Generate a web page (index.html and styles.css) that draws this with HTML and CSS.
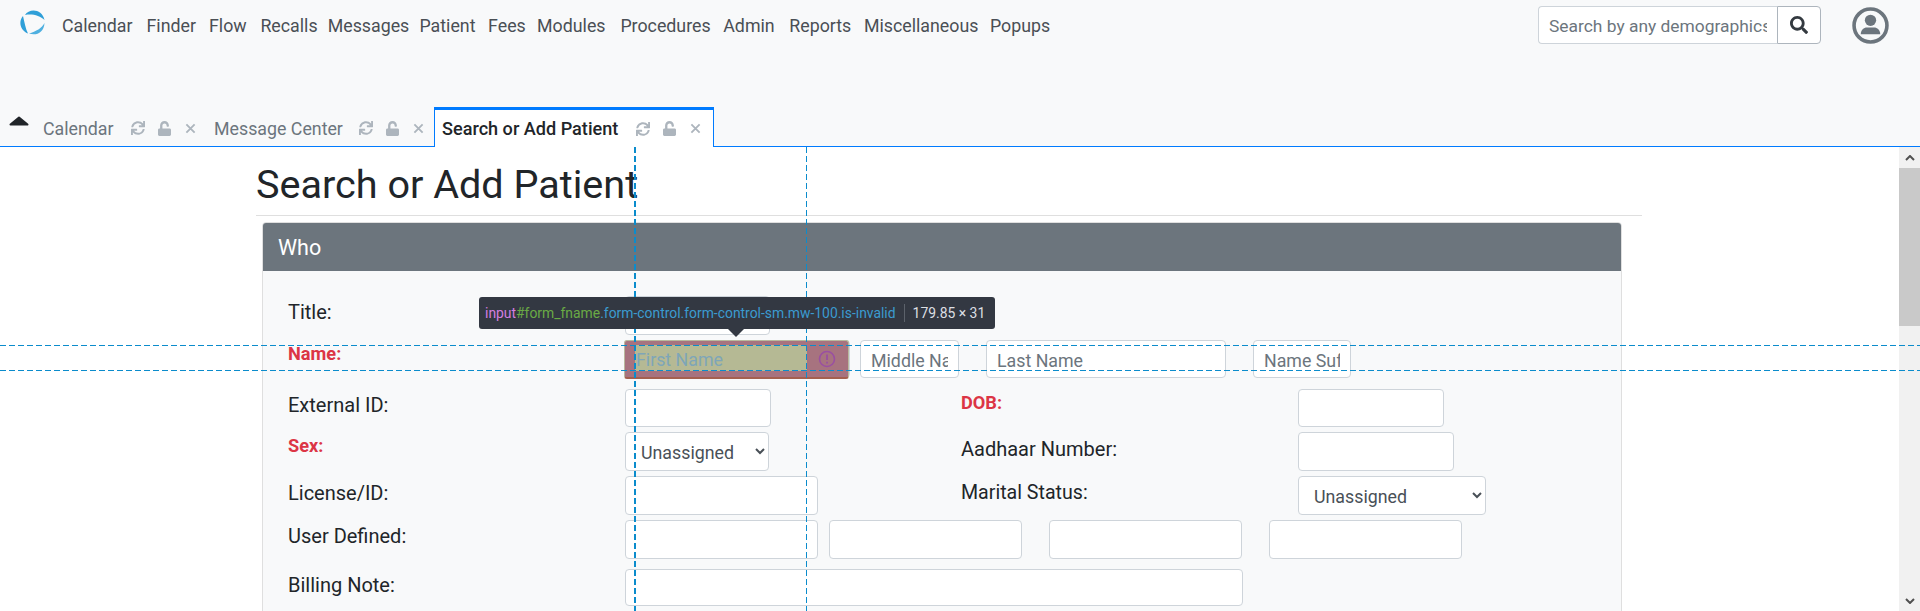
FILE: index.html
```html
<!DOCTYPE html>
<html lang="en">
<head>
  <meta charset="UTF-8" />
  <title>Search or Add Patient</title>
  <link rel="stylesheet" href="styles.css">
</head>
<body>
  <svg class="defs" width="0" height="0">
    <symbol id="i-sync" viewBox="0 0 512 512"><path d="M440.65 12.57l4 82.77A247.16 247.16 0 0 0 255.83 8C134.73 8 33.91 94.92 12.29 209.82A12 12 0 0 0 24.09 224h49.05a12 12 0 0 0 11.67-9.26 175.91 175.91 0 0 1 317-56.94l-101.46-4.86a12 12 0 0 0-12.57 12v47.41a12 12 0 0 0 12 12H500a12 12 0 0 0 12-12V12a12 12 0 0 0-12-12h-47.37a12 12 0 0 0-11.98 12.57zM255.83 432a175.61 175.61 0 0 1-146-77.8l101.8 4.87a12 12 0 0 0 12.57-12v-47.4a12 12 0 0 0-12-12H12a12 12 0 0 0-12 12V500a12 12 0 0 0 12 12h47.35a12 12 0 0 0 12-12.6l-4.15-82.57A247.17 247.17 0 0 0 255.83 504c121.11 0 221.93-86.92 243.55-201.82a12 12 0 0 0-11.8-14.18h-49.05a12 12 0 0 0-11.67 9.26A175.86 175.86 0 0 1 255.83 432z"/></symbol>
    <symbol id="i-unlock" viewBox="0 0 448 512"><path d="M400 256H152V152.9c0-39.6 31.7-72.5 71.3-72.9 40-.4 72.7 32.1 72.7 72v16c0 13.3 10.7 24 24 24h32c13.3 0 24-10.7 24-24v-16C376 68 307.5-.3 223.5 0 139.5.3 72 69.5 72 153.5V256H48c-26.5 0-48 21.5-48 48v160c0 26.5 21.5 48 48 48h352c26.5 0 48-21.5 48-48V304c0-26.5-21.5-48-48-48z"/></symbol>
    <symbol id="i-times" viewBox="0 0 12 12"><path d="M1.5 1.5l9 9M10.5 1.5l-9 9" stroke="currentColor" stroke-width="2" fill="none"/></symbol>
  </svg>

  <header class="topbar">
    <svg class="logo" viewBox="0 0 25 25">
      <path d="M5 5C9-1.500 22-1.500 24.500 10 20 5.500 12 3.500 5 5z" fill="#2f9fd8"/>
      <path d="M3 6C-1.500 11-.5 20 8 23.500 5.500 19 4.500 12 3 6z" fill="#2f9fd8"/>
      <path d="M9 23.500C16 26 24 23 24.500 13 22 18 16 21.500 9 23.500z" fill="#4fb0e0"/>
    </svg>
    <nav class="mainnav">
      <a href="#">Calendar</a>
      <a href="#">Finder</a>
      <a href="#">Flow</a>
      <a href="#">Recalls</a>
      <a href="#">Messages</a>
      <a href="#">Patient</a>
      <a href="#">Fees</a>
      <a href="#">Modules</a>
      <a href="#">Procedures</a>
      <a href="#">Admin</a>
      <a href="#">Reports</a>
      <a href="#">Miscellaneous</a>
      <a href="#">Popups</a>
    </nav>
    <div class="search">
      <input type="text" placeholder="Search by any demographics" />
      <button>
        <svg viewBox="0 0 512 512"><path d="M505 442.7L405.3 343c-4.500-4.500-10.600-7-17-7H372c27.600-35.300 44-79.700 44-128C416 93.100 322.900 0 208 0S0 93.100 0 208s93.100 208 208 208c48.300 0 92.700-16.400 128-44v16.300c0 6.400 2.500 12.500 7 17l99.700 99.700c9.400 9.400 24.600 9.400 33.900 0l28.300-28.300c9.400-9.400 9.400-24.600.1-34zM208 336c-70.700 0-128-57.200-128-128 0-70.700 57.200-128 128-128 70.700 0 128 57.200 128 128 0 70.700-57.200 128-128 128z"/></svg>
      </button>
    </div>
    <svg class="avatar" viewBox="0 0 36 36">
      <circle cx="18" cy="18" r="16" fill="none" stroke="#6c757d" stroke-width="3.500"/>
      <circle cx="18" cy="13" r="5.500" fill="#6c757d"/>
      <path d="M8.500 26.500c0-4 3-6.500 6-6.500h7c3 0 6 2.500 6 6.500z" fill="#6c757d"/>
    </svg>
  </header>

  <div class="tabbar">
    <svg class="caret" viewBox="0 0 20 10"><path d="M10 1.500L18.500 8.500H1.500z" fill="#212529" stroke="#212529" stroke-width="2" stroke-linejoin="round"/></svg>
    <div class="tab tab-first">
      <span class="tab-name">Calendar</span>
      <svg class="ic ic-sync"><use href="#i-sync"/></svg>
      <svg class="ic ic-lock"><use href="#i-unlock"/></svg>
      <svg class="ic ic-x"><use href="#i-times"/></svg>
    </div>
    <div class="tab tab-second">
      <span class="tab-name">Message Center</span>
      <svg class="ic ic-sync"><use href="#i-sync"/></svg>
      <svg class="ic ic-lock"><use href="#i-unlock"/></svg>
      <svg class="ic ic-x"><use href="#i-times"/></svg>
    </div>
    <div class="tab tab-active">
      <span class="tab-name">Search or Add Patient</span>
      <svg class="ic ic-sync"><use href="#i-sync"/></svg>
      <svg class="ic ic-lock"><use href="#i-unlock"/></svg>
      <svg class="ic ic-x"><use href="#i-times"/></svg>
    </div>
  </div>

  <div class="workarea">
    <main class="content">
      <h2 class="page-title">Search or Add Patient</h2>
      <hr class="title-rule" />
      <section class="card">
        <div class="card-head">Who</div>
        <div class="card-body">
          <div class="row row-title">
            <label class="lbl">Title:</label>
            <input class="w145" type="text" />
          </div>
          <div class="row row-name">
            <label class="lbl req">Name:</label>
            <input class="w225 invalid" type="text" />
            <input class="w99" type="text" placeholder="Middle Name" />
            <input class="w240" type="text" placeholder="Last Name" />
            <input class="w98" type="text" placeholder="Name Suffix" />
          </div>
          <div class="row row-ext">
            <label class="lbl">External ID:</label>
            <input class="w146" type="text" />
            <label class="lbl2 req">DOB:</label>
            <input class="w146" type="text" />
          </div>
          <div class="row">
            <label class="lbl req">Sex:</label>
            <select class="w144"><option>Unassigned</option></select>
            <label class="lbl2 lbl2-sex">Aadhaar Number:</label>
            <input class="w156" type="text" />
          </div>
          <div class="row row-lic">
            <label class="lbl">License/ID:</label>
            <input class="w193" type="text" />
            <label class="lbl2 lbl2-lic">Marital Status:</label>
            <select class="w188"><option>Unassigned</option></select>
          </div>
          <div class="row row-user">
            <label class="lbl">User Defined:</label>
            <input class="w193" type="text" />
            <input class="w193" type="text" />
            <input class="w193" type="text" />
            <input class="w193" type="text" />
          </div>
          <div class="row row-bill">
            <label class="lbl">Billing Note:</label>
            <input class="w618" type="text" />
          </div>
        </div>
      </section>
    </main>
    <aside class="scrollbar">
      <div class="sb-btn"><svg viewBox="0 0 10 6"><path d="M1 5l4-4 4 4" fill="none" stroke="#505050" stroke-width="2"/></svg></div>
      <div class="sb-thumb"></div>
      <div class="sb-track"></div>
      <div class="sb-btn"><svg viewBox="0 0 10 6"><path d="M1 1l4 4 4-4" fill="none" stroke="#505050" stroke-width="2"/></svg></div>
    </aside>
  </div>

  <!-- devtools inspect overlay -->
  <div class="hl">
    <span class="hl-text">First Name</span>
    <svg class="hl-icon" viewBox="0 0 18 18">
      <circle cx="9" cy="9" r="7.500" fill="none" stroke="#9a4fa2" stroke-width="1.600"/>
      <path d="M9 4.500v5.500M9 11.800v1.700" stroke="#9a4fa2" stroke-width="1.800" fill="none"/>
    </svg>
  </div>

  <div class="guide guide-v guide-v1"></div>
  <div class="guide guide-v guide-v2"></div>
  <div class="guide guide-h guide-h1"></div>
  <div class="guide guide-h guide-h2"></div>

  <div class="inspect-tip">
    <span class="t-tag">input</span><span class="t-id">#form_fname</span><span class="t-cls">.form-control.form-control-sm.mw-100.is-invalid</span><span class="t-sep"></span><span class="t-size">179.85 × 31</span>
  </div>
</body>
</html>
```

FILE: styles.css
```css
* {
  box-sizing: border-box;
}

html, body {
  margin: 0;
  height: 611px;
  overflow: hidden;
}

body {
  position: relative;
  background: #fff;
  color: #212529;
  font-family: Roboto, "Open Sans", sans-serif;
  font-size: 20px;
}

.defs {
  position: absolute;
}

/* top navigation */
.topbar {
  height: 107px;
  background: #f8f9fa;
  display: flex;
  align-items: flex-start;
  padding-left: 20px;
  padding-right: 31px;
}

.logo {
  width: 25px;
  height: 25px;
  margin-top: 10px;
  flex: none;
}

.mainnav {
  display: grid;
  grid-template-columns: 84.500px 62.500px 51.400px 67.300px 91.800px 68.600px 49px 83.300px 102.900px 66px 74.700px 126px auto;
  align-items: center;
  height: 51px;
  margin-left: 17px;
  flex: 1;
}

.mainnav a {
  color: #4a4f55;
  text-decoration: none;
  font-size: 17.800px;
}

.search {
  display: flex;
  margin-top: 6px;
  width: 283px;
  height: 38px;
}

.search input {
  width: 239px;
  height: 38px;
  border: 1px solid #ced4da;
  border-right: 0;
  border-radius: 4px 0 0 4px;
  padding: 2px 10px 0;
  font: 17.400px Roboto, sans-serif;
  color: #495057;
}

.search input::placeholder, .row input::placeholder {
  color: #6c757d;
  opacity: 1;
}

.search button {
  width: 44px;
  height: 38px;
  background: #fff;
  border: 1px solid #adb5bd;
  border-radius: 0 4px 4px 0;
  padding: 0;
  display: flex;
  align-items: center;
  justify-content: center;
}

.search button svg {
  width: 18px;
  height: 18px;
  fill: #343a40;
}

.avatar {
  width: 37px;
  height: 37px;
  margin-top: 7px;
  margin-left: 31px;
}

/* tabs */
.tabbar {
  height: 40px;
  background: #f8f9fa;
  border-bottom: 1px solid #007bff;
  display: flex;
  padding-left: 9px;
}

.caret {
  width: 20px;
  height: 10px;
  margin-top: 9px;
  flex: none;
}

.tab {
  display: flex;
  align-items: center;
  height: 40px;
  padding-top: 2px;
  font-size: 17.800px;
  color: #6c757d;
}

.tab-first {
  margin-left: 14px;
  width: 171px;
}

.tab-second {
  width: 220px;
}

.tab-active {
  width: 280px;
  padding-left: 7px;
  padding-top: 0;
  background: #fff;
  color: #212529;
  border: 1px solid #007bff;
  border-top: 3px solid #007bff;
  border-bottom: 0;
  font-weight: 500;
  font-size: 18.100px;
}

.tab-name {
  white-space: nowrap;
}

.tab-first .tab-name { width: 88px; }
.tab-second .tab-name { width: 145px; }
.tab-active .tab-name { width: 194px; }

.ic {
  fill: #adb5bd;
  color: #adb5bd;
  flex: none;
}

.ic-sync {
  width: 14px;
  height: 14px;
  margin-right: 13px;
}

.ic-lock {
  width: 13px;
  height: 15px;
  margin-right: 14px;
}

.ic-x {
  width: 11px;
  height: 11px;
}

/* page */
.workarea {
  display: flex;
  height: 464px;
}

.content {
  flex: 1;
  padding-left: 256px;
  overflow: hidden;
}

.page-title {
  margin: 0;
  height: 68px;
  padding-top: 14px;
  font-size: 39.600px;
  line-height: 48px;
  font-weight: 400;
}

.title-rule {
  width: 1386px;
  margin: 0;
  border: 0;
  border-top: 1px solid #dfdfdf;
}

.card {
  width: 1360px;
  margin: 6px 0 0 6px;
  border: 1px solid #dfdfdf;
  border-radius: 4px;
  background: #f8f9fa;
}

.card-head {
  height: 48px;
  background: #6c757d;
  color: #fff;
  font-size: 21.500px;
  line-height: 49px;
  padding-left: 15px;
  border-radius: 3px 3px 0 0;
}

.card-body {
  padding: 25px 0 30px 25px;
}

.row {
  display: flex;
  height: 39px;
  margin-bottom: 5px;
}

.row-name {
  height: 38px;
  margin-bottom: 11px;
}

.row-ext {
  height: 38px;
}

.row-user {
  margin-bottom: 10px;
}

.row-bill {
  height: 37px;
}

.lbl, .lbl2 {
  width: 337px;
  flex: none;
  font-size: 20px;
  line-height: 33px;
}

.lbl2 {
  margin-left: 190px;
}

.lbl.req, .lbl2.req {
  color: #dc3545;
  font-weight: 700;
  font-size: 18.200px;
  line-height: 28px;
}

.row input, .row select {
  height: 100%;
  flex: none;
  background: #fff;
  border: 1px solid #ced4da;
  border-radius: 4px;
  font: 17.800px Roboto, sans-serif;
  color: #495057;
  padding: 3px 10px 0;
}

.row select {
  padding: 2px 0 0 11px;
}

.w145 { width: 145px; }
.w146 { width: 146px; }
.w144 { width: 144px; }
.w156 { width: 156px; }
.w193 { width: 193px; }
.w188 { width: 188px; }
.w618 { width: 618px; }
.w225 { width: 225px; }
.w99 { width: 99px; margin-left: 10px; }
.w240 { width: 240px; margin-left: 27px; }
.w98 { width: 98px; margin-left: 27px; }

.row .lbl2-sex { margin-left: 192px; line-height: 35px; }
.row-lic .lbl { line-height: 35px; }
.row .lbl2-lic { margin-left: 143px; line-height: 33px; font-size: 19.600px; }
.row-user .w193:nth-child(3) { margin-left: 11px; }
.row-user .w193:nth-child(4) { margin-left: 27px; }
.row-user .w193:nth-child(5) { margin-left: 27px; }

/* devtools overlay */
.guide {
  position: absolute;
  pointer-events: none;
}

.guide-v {
  top: 147px;
  bottom: 0;
  width: 1px;
  background: repeating-linear-gradient(to bottom, #0b8ccc 0 6px, transparent 6px 9px);
}

.guide-v1 { left: 634px; width: 2px; }
.guide-v2 { left: 806px; }

.guide-h {
  left: 0;
  right: 0;
  height: 1px;
  background: repeating-linear-gradient(to right, #0b8ccc 0 6px, transparent 6px 9px);
}

.guide-h1 { top: 345px; }
.guide-h2 { top: 370px; }

.hl {
  position: absolute;
  left: 624px;
  top: 340px;
  width: 225px;
  height: 39px;
  background: #a7737f;
  border: 1px solid #b9b99e;
  border-bottom: 2px solid #a4604f;
  border-radius: 3px;
}

.hl-text {
  position: absolute;
  left: 10px;
  top: 4px;
  width: 172px;
  height: 26px;
  padding-left: 1px;
  background: #b5b994;
  color: #7ea6b8;
  font-size: 17.800px;
  line-height: 29px;
}

.hl-icon {
  position: absolute;
  left: 193px;
  top: 9px;
  width: 18px;
  height: 18px;
}

.inspect-tip {
  position: absolute;
  left: 479px;
  top: 297px;
  width: 516px;
  height: 32px;
  background: #333842;
  border-radius: 3px;
  color: #dcdfe3;
  display: flex;
  align-items: center;
  padding-left: 6px;
  font-size: 13.900px;
  white-space: nowrap;
}

.inspect-tip::after {
  content: "";
  position: absolute;
  left: 249px;
  top: 32px;
  border-left: 8px solid transparent;
  border-right: 8px solid transparent;
  border-top: 8px solid #333842;
}

.t-tag { color: #d47fe0; }
.t-id { color: #6aaa45; }
.t-cls { color: #3b9bd0; }

.t-sep {
  width: 1px;
  height: 18px;
  background: #5c626b;
  margin: 0 8px;
}

/* fake scrollbar, the page behind it is taller than the window */
.scrollbar {
  width: 21px;
  flex: none;
  display: flex;
  flex-direction: column;
  background: #f1f1f1;
}

.sb-btn {
  height: 21px;
  display: flex;
  align-items: center;
  justify-content: center;
}

.sb-btn svg {
  width: 10px;
  height: 6px;
}

.sb-thumb {
  height: 158px;
  background: #c9c9c9;
}

.sb-track {
  flex: 1;
}
```
